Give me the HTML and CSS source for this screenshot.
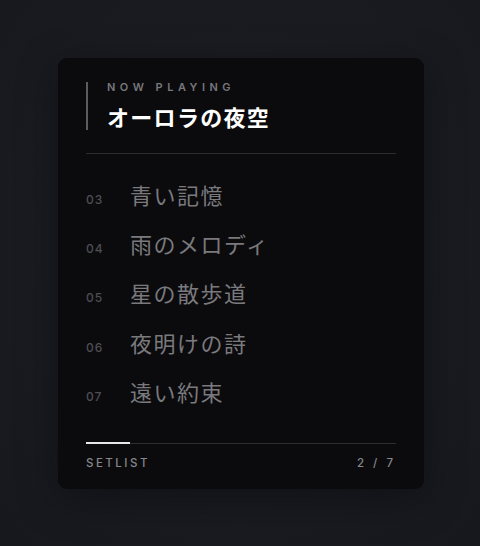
FILE: index.html
```html
<!DOCTYPE html>
<html lang="ja">
<head>
<meta charset="utf-8">
<title>Setlist</title>
<link rel="stylesheet" href="styles.css">
</head>
<body>
  <main class="card">
    <header class="now">
      <div class="now-label">NOW PLAYING</div>
      <h1 class="now-title">オーロラの夜空</h1>
    </header>
    <hr class="divider">
    <ol class="tracks">
      <li class="track"><span class="num">03</span><span class="name">青い記憶</span></li>
      <li class="track"><span class="num">04</span><span class="name">雨のメロディ</span></li>
      <li class="track"><span class="num">05</span><span class="name">星の散歩道</span></li>
      <li class="track"><span class="num">06</span><span class="name">夜明けの詩</span></li>
      <li class="track"><span class="num">07</span><span class="name">遠い約束</span></li>
    </ol>
    <div class="progress"><div class="progress-fill" style="width: 14.2%"></div></div>
    <footer class="foot">
      <span>SETLIST</span>
      <span class="count">2 / 7</span>
    </footer>
  </main>
</body>
</html>
```

FILE: styles.css
```css
html, body {
  margin: 0;
  height: 100%;
}

body {
  background: radial-gradient(ellipse at 50% 45%, #1c1e24 0%, #191b21 60%, #16181d 100%);
  font-family: Inter, "Noto Sans CJK JP", sans-serif;
  display: flex;
  align-items: center;
  justify-content: center;
  padding-left: 2px;
  box-sizing: border-box;
}

.card {
  width: 366px;
  height: 431px;
  box-sizing: border-box;
  padding: 24px 28px 0;
  background: #0b0b0d;
  border-radius: 9px;
  box-shadow: 0 10px 40px rgba(0, 0, 0, 0.35);
  display: flex;
  flex-direction: column;
}

.now {
  border-left: 2px solid #5c5c60;
  padding-left: 19px;
  height: 48px;
}

.now-label {
  font-size: 11px;
  font-weight: 600;
  letter-spacing: 4.5px;
  color: #77777c;
  line-height: 13px;
  margin-top: -1px;
}

.now-title {
  margin: 8px 0 0;
  font-family: "Noto Sans CJK JP", sans-serif;
  font-size: 22px;
  font-weight: 700;
  letter-spacing: 1.3px;
  line-height: 28px;
  color: #ffffff;
}

.divider {
  border: 0;
  border-top: 1px solid #2c2c30;
  margin: 23px 0 0;
}

.tracks {
  list-style: none;
  margin: 24px 0 0;
  padding: 0;
}

.track {
  display: flex;
  align-items: baseline;
  height: 49.4px;
}

.num {
  width: 44px;
  font-size: 12px;
  font-weight: 500;
  letter-spacing: 1px;
  color: #4e4e53;
}

.name {
  font-family: "Noto Sans CJK JP", sans-serif;
  font-size: 22px;
  font-weight: 400;
  letter-spacing: 1.5px;
  color: #7a7a7e;
}

.progress {
  margin-top: auto;
  height: 1px;
  background: #2e2e32;
}

.progress-fill {
  height: 2px;
  margin-top: -1px;
  background: #e8e8ea;
}

.foot {
  display: flex;
  justify-content: space-between;
  font-size: 11.5px;
  font-weight: 500;
  letter-spacing: 2.5px;
  color: #86868b;
  padding: 12px 0 19px;
}

.count {
  letter-spacing: 3px;
}
```
